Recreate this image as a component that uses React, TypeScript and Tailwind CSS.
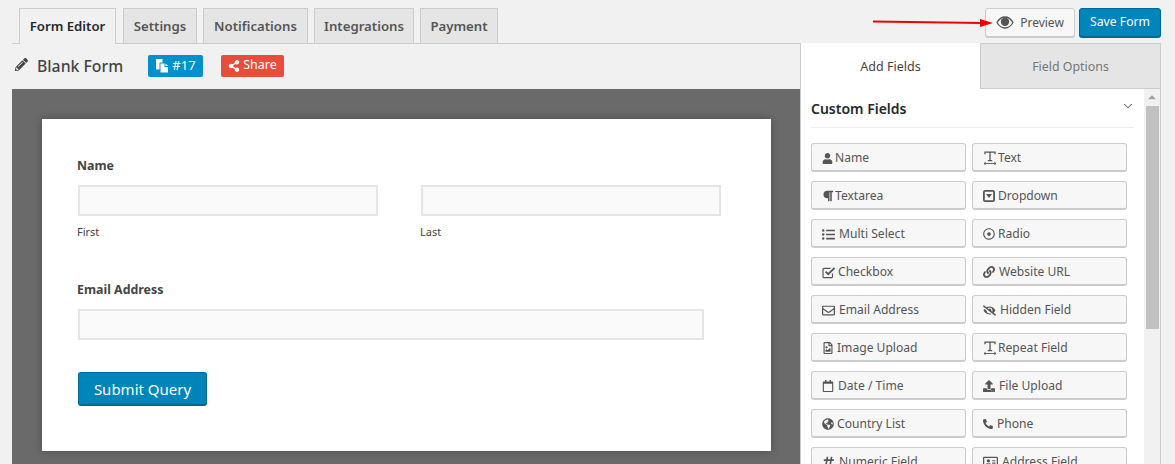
import React from "react";
import {
  FaUser, FaParagraph, FaListUl, FaRegDotCircle, FaLink, FaRegEnvelope, FaEyeSlash,
  FaRegFileImage, FaRegCalendar, FaUpload, FaGlobeAmericas, FaPhoneAlt, FaHashtag, FaRegAddressCard,
  FaPencilAlt, FaShareAlt, FaCaretUp,
} from "react-icons/fa";
import { ChevronDown } from "lucide-react";

const TextIcon = () => (
  <svg width="14" height="14" viewBox="0 0 14 14" fill="none" stroke="currentColor" strokeWidth="1.3">
    <path d="M2 3.2V1.2H12V3.2M7 1.2V9.6M4.8 9.7H9.2" />
    <path d="M1 12.5H13M1 12.5L2.8 11M1 12.5L2.8 14M13 12.5L11.2 11M13 12.5L11.2 14" strokeWidth="0.9" />
  </svg>
);

const CheckIcon = () => (
  <svg width="14" height="13" viewBox="0 0 14 13" fill="none" stroke="currentColor">
    <path d="M10.5 7.5V10.5A1.2 1.2 0 0 1 9.3 11.7H2.2A1.2 1.2 0 0 1 1 10.5V3.5A1.2 1.2 0 0 1 2.2 2.3H8.5" strokeWidth="1.2" />
    <path d="M3.6 5.6L6.2 8.2L12.6 1.8" strokeWidth="1.9" />
  </svg>
);

const DropIcon = () => (
  <svg width="12" height="12" viewBox="0 0 12 12">
    <rect x="0.9" y="0.9" width="10.2" height="10.2" rx="1.2" fill="none" stroke="currentColor" strokeWidth="1.8" />
    <path d="M3 4H9L6 8Z" fill="currentColor" />
  </svg>
);

const FilesIcon = () => (
  <svg width="14" height="15" viewBox="0 0 14 15" fill="white">
    <path d="M1 1H7.5V4.5H4.5V11.5H1Z" />
    <path d="M5.5 5.5H9.5V9H13V14.5H5.5Z" />
    <path d="M10.5 5.5L13 8H10.5Z" />
  </svg>
);

const EyeIcon = () => (
  <svg width="18" height="13" viewBox="0 0 18 13">
    <path d="M1 6.5C3 3 5.8 1 9 1s6 2 8 5.5C15 10 12.2 12 9 12S3 10 1 6.5Z" fill="none" stroke="#555" strokeWidth="1.3" />
    <circle cx="9" cy="5.8" r="4.2" fill="#555" />
  </svg>
);

const tabs = ["Settings", "Notifications", "Integrations", "Payment"];
const tabW = ["w-[74px]", "w-[105px]", "w-[100px]", "w-[78px]"];

const fields: [React.ReactNode, string, string][] = [
  [<FaUser size={11} />, "Name", "w-[13px]"], [<TextIcon />, "Text", "w-[15px]"],
  [<FaParagraph size={12} />, "Textarea", "w-[13px]"], [<DropIcon />, "Dropdown", "w-[15px]"],
  [<FaListUl size={13} />, "Multi Select", "w-[17px]"], [<FaRegDotCircle size={12} />, "Radio", "w-[15px]"],
  [<CheckIcon />, "Checkbox", "w-[16px]"], [<FaLink size={12} />, "Website URL", "w-[16px]"],
  [<FaRegEnvelope size={13} />, "Email Address", "w-[17px]"], [<FaEyeSlash size={13} />, "Hidden Field", "w-[17px]"],
  [<FaRegFileImage size={12} />, "Image Upload", "w-[15px]"], [<TextIcon />, "Repeat Field", "w-[15px]"],
  [<FaRegCalendar size={12} />, "Date / Time", "w-[16px]"], [<FaUpload size={12} />, "File Upload", "w-[16px]"],
  [<FaGlobeAmericas size={12} />, "Country List", "w-[15px]"], [<FaPhoneAlt size={10} />, "Phone", "w-[14px]"],
  [<FaHashtag size={13} />, "Numeric Field", "w-[17px]"], [<FaRegAddressCard size={15} />, "Address Field", "w-[19px]"],
];

export default function App() {
  return (
    <div className="relative w-[1175px] h-[464px] overflow-hidden bg-[#f1f1f1] flex flex-col font-['Noto_Sans',sans-serif] text-[#444]">
      <div className="h-[44px] shrink-0 ml-[12px] mr-[14px] pl-[7px] border-b border-[#ccc] flex items-start justify-between">
        <div className="flex gap-[6px] pt-[8px]">
          <div className="w-[97px] mr-[1px] h-[36px] bg-[#f1f1f1] border border-b-0 border-[#ccc] flex items-center justify-center pt-[1px] text-[13.2px] font-semibold text-[#23282d]">
            Form Editor
          </div>
          {tabs.map((t, i) => (
            <div key={t} className={`${tabW[i]} h-[35px] bg-[#e5e5e5] border border-b-0 border-[#ccc] flex items-center justify-center pt-[1px] text-[13.2px] font-semibold text-[#555]`}>
              {t}
            </div>
          ))}
        </div>
        <div className="flex gap-[4px] pt-[8px]">
          <div className="w-[90px] h-[29px] bg-[#f7f7f7] border border-[#ccc] rounded-[3px] flex items-center justify-center gap-[6px] text-[12px] text-[#555] shadow-[0_1px_0_#ccc]">
            <EyeIcon />
            <span>Preview</span>
          </div>
          <div className="w-[82px] h-[29px] bg-[#0085ba] border border-[#006799] rounded-[3px] flex items-center justify-center text-[12.2px] text-white shadow-[0_1px_0_#006799]">
            Save Form
          </div>
        </div>
      </div>

      <div className="flex-1 min-h-0 flex pl-[12px] pr-[14px]">
        <div className="w-[788px] shrink-0 flex flex-col">
          <div className="h-[45px] shrink-0 flex items-center pl-[3px]">
            <FaPencilAlt size={13} className="text-[#444] mb-[4px]" />
            <span className="ml-[9px] text-[15.8px] font-medium text-[#444] w-[111px]">Blank Form</span>
            <div className="w-[55px] h-[22px] bg-[#0091cd] rounded-[2px] flex items-center justify-center gap-[3px] text-[13px] text-white mb-[2px]">
              <FilesIcon />
              <span>#17</span>
            </div>
            <div className="ml-[18px] w-[63px] h-[22px] bg-[#e74c3c] rounded-[2px] flex items-center justify-center gap-[3px] text-[12.5px] text-white mb-[2px]">
              <FaShareAlt size={12} />
              <span>Share</span>
            </div>
          </div>
          <div className="flex-1 min-h-0 bg-[#6a6a6a] pl-[30px] pr-[29px] pt-[30px]">
            <div className="bg-white h-[332px] shadow-[0_0_8px_rgba(0,0,0,0.3)] pl-[35px] pt-[37px]">
              <div className="text-[12.4px] font-bold text-[#444] leading-[20px]">Name</div>
              <div className="flex mt-[9px] gap-[42px]">
                <div>
                  <div className="w-[300px] h-[31px] bg-[#fafafa] border-2 border-[#e5e5e5] ml-[1px]" />
                  <div className="text-[11px] text-[#444] mt-[8px] leading-[16px]">First</div>
                </div>
                <div>
                  <div className="w-[300px] h-[31px] bg-[#fafafa] border-2 border-[#e5e5e5] ml-[1px]" />
                  <div className="text-[11px] text-[#444] mt-[8px] leading-[16px]">Last</div>
                </div>
              </div>
              <div className="text-[12.4px] font-bold text-[#444] leading-[20px] mt-[40px]">Email Address</div>
              <div className="w-[626px] h-[31px] bg-[#fafafa] border-2 border-[#e5e5e5] mt-[9px] ml-[1px]" />
              <div className="w-[129px] h-[34px] bg-[#0085ba] border border-[#006799] border-b-2 rounded-[3px] mt-[32px] ml-[1px] flex items-center justify-center text-[15px] pt-[1px] text-white">
                Submit Query
              </div>
            </div>
          </div>
        </div>

        <div className="w-[361px] shrink-0 border-x border-[#ccc] flex flex-col min-h-0 -mt-px">
          <div className="flex h-[46px] shrink-0">
            <div className="w-[179px] bg-white flex items-center justify-center text-[12.5px] pt-[2px] text-[#444]">Add Fields</div>
            <div className="flex-1 bg-[#e5e5e5] border-l border-b border-[#ccc] border-t flex items-center justify-center text-[12.4px] pt-[2px] text-[#777]">Field Options</div>
          </div>
          <div className="flex-1 min-h-0 flex bg-white">
            <div className="flex-1 pl-[10px] pr-[10px] overflow-hidden">
              <div className="h-[39px] border-b border-[#eee] flex items-center justify-between pt-[1px]">
                <span className="text-[14px] font-semibold text-[#23282d]">Custom Fields</span>
                <ChevronDown size={14} strokeWidth={1.6} className="mr-[-1px] mb-[5px] text-[#32373c]" />
              </div>
              <div className="grid grid-cols-[155px_155px] gap-x-[6px] gap-y-[9px] mt-[15px]">
                {fields.map(([icon, label, w]) => (
                  <div key={label} className="h-[29px] bg-[#f7f7f7] border border-[#ccc] border-b-2 rounded-[3px] flex items-center pl-[10px] pt-[2px] text-[12.1px] text-[#555]">
                    <span className={`shrink-0 ${w}`}>{icon}</span>
                    <span>{label}</span>
                  </div>
                ))}
              </div>
            </div>
            <div className="w-[16px] shrink-0 bg-[#f1f1f1] flex flex-col items-center">
              <FaCaretUp size={12} className="text-[#a3a3a3] mt-[2px]" />
              <div className="w-[13px] h-[223px] bg-[#c1c1c1] mt-[3px]" />
            </div>
          </div>
        </div>
      </div>

      <svg className="absolute left-[870px] top-[15px]" width="130" height="14" viewBox="0 0 130 14">
        <path d="M3 6.5 L112 8" stroke="#f00000" strokeWidth="2.2" />
        <path d="M110 4 L123 8 L110 12 Z" fill="#f00000" />
      </svg>
    </div>
  );
}
